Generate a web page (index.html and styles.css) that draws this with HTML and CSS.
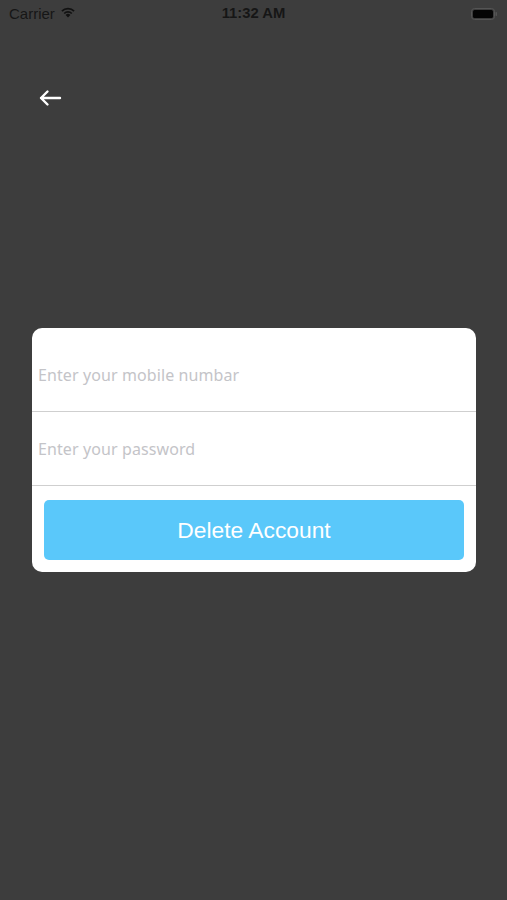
FILE: index.html
```html
<!DOCTYPE html>
<html>
<head>
<meta charset="utf-8">
<link rel="stylesheet" href="styles.css">
</head>
<body>
<div class="screen">
  <div class="status">
    <div class="status-left">
      <span class="carrier">Carrier</span>
      <svg class="wifi" width="16" height="12" viewBox="0 0 16 12">
        <path d="M8 11.5 L5.6 8.9 A3.4 3.4 0 0 1 10.4 8.9 Z" fill="#111"/>
        <path d="M3.6 6.9 A6.2 6.2 0 0 1 12.4 6.9 L11.2 8.1 A4.5 4.5 0 0 0 4.8 8.1 Z" fill="#111"/>
        <path d="M1.3 4.6 A9.4 9.4 0 0 1 14.7 4.6 L13.5 5.8 A7.7 7.7 0 0 0 2.5 5.8 Z" fill="#111"/>
      </svg>
    </div>
    <div class="time">11:32 AM</div>
    <div class="status-right">
      <svg width="27" height="12" viewBox="0 0 27 12">
        <rect x="0.5" y="0.5" width="23" height="11" rx="3" fill="none" stroke="#555" stroke-width="1"/>
        <rect x="2" y="2" width="20" height="8" rx="1.5" fill="#050505"/>
        <rect x="24.5" y="4" width="1.5" height="4" rx="0.7" fill="#555"/>
      </svg>
    </div>
  </div>
  <div class="nav">
    <svg class="back" width="24" height="18" viewBox="0 0 24 18">
      <path d="M22 9 H3 M9.5 2.5 L3 9 L9.5 15.5" fill="none" stroke="#fff" stroke-width="2.4" stroke-linecap="round" stroke-linejoin="round"/>
    </svg>
  </div>
  <div class="card">
    <div class="field field-first"><span class="placeholder">Enter your mobile numbar</span></div>
    <div class="field field-second"><span class="placeholder">Enter your password</span></div>
    <div class="btn-wrap">
      <div class="btn">Delete Account</div>
    </div>
  </div>
</div>
</body>
</html>
```

FILE: styles.css
```css
* { box-sizing: border-box; }
html, body { margin: 0; padding: 0; }
body {
  background: #3d3d3d;
  font-family: "Noto Sans", "Liberation Sans", sans-serif;
  width: 507px;
  height: 900px;
  overflow: hidden;
}
.screen {
  display: flex;
  flex-direction: column;
  height: 900px;
}
.status {
  height: 28px;
  display: flex;
  align-items: center;
  justify-content: space-between;
  padding: 0 9px 2px 9px;
  position: relative;
  color: #141414;
}
.status-left {
  display: flex;
  align-items: center;
  gap: 5px;
}
.carrier {
  font-family: "Liberation Sans", sans-serif;
  font-size: 15px;
  color: #161616;
}
.wifi { margin-top: -3px; }
.time {
  position: absolute;
  left: 0;
  right: 0;
  top: 5px;
  text-align: center;
  font-family: "Liberation Sans", sans-serif;
  font-weight: bold;
  font-size: 14.8px;
  color: #161616;
  pointer-events: none;
}
.status-right {
  display: flex;
  align-items: center;
  padding-top: 1px;
}
.nav {
  height: 300px;
  padding: 61px 0 0 38px;
}
.back { display: block; }
.card {
  margin: 0 31px 0 32px;
  background: #fff;
  border-radius: 10px;
  overflow: hidden;
}
.field {
  display: flex;
  align-items: center;
  padding-left: 6px;
  border-bottom: 1.5px solid #cfcfcf;
}
.field-first { height: 84px; padding-top: 10px; }
.field-second { height: 74px; }
.placeholder {
  font-family: "Noto Sans", sans-serif;
  font-size: 16px;
  color: #c4c4c8;
  letter-spacing: 0.1px;
}
.btn-wrap {
  padding: 14px 12px 12px 12px;
}
.btn {
  height: 60px;
  background: #5ac8fa;
  border-radius: 5px;
  color: #fff;
  display: flex;
  align-items: center;
  justify-content: center;
  font-family: "Liberation Sans", sans-serif;
  font-size: 22.8px;
}
```
